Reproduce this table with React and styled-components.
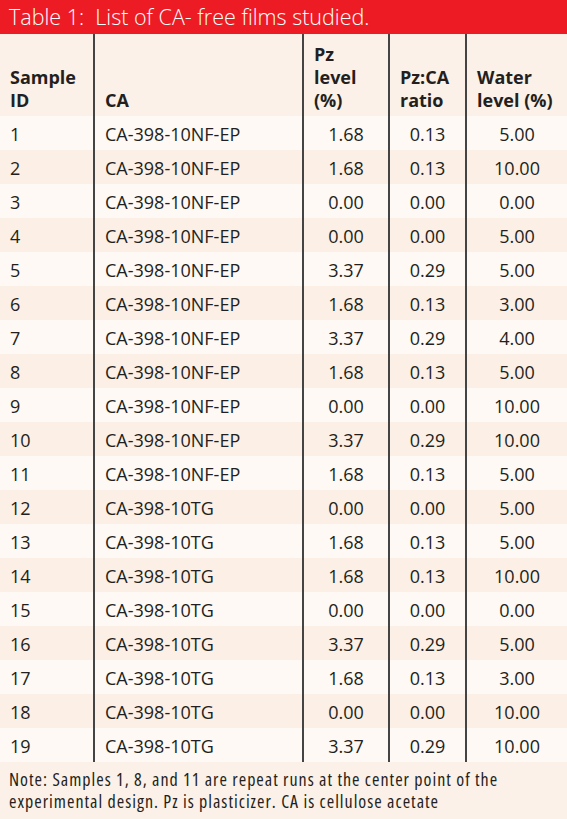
import React from 'react';
import styled, { createGlobalStyle } from 'styled-components';

const GlobalStyle = createGlobalStyle`
  html, body {
    margin: 0;
    padding: 0;
    background: #fcf1e8;
  }
`;

const rows = [
  ['1', 'CA-398-10NF-EP', '1.68', '0.13', '5.00'],
  ['2', 'CA-398-10NF-EP', '1.68', '0.13', '10.00'],
  ['3', 'CA-398-10NF-EP', '0.00', '0.00', '0.00'],
  ['4', 'CA-398-10NF-EP', '0.00', '0.00', '5.00'],
  ['5', 'CA-398-10NF-EP', '3.37', '0.29', '5.00'],
  ['6', 'CA-398-10NF-EP', '1.68', '0.13', '3.00'],
  ['7', 'CA-398-10NF-EP', '3.37', '0.29', '4.00'],
  ['8', 'CA-398-10NF-EP', '1.68', '0.13', '5.00'],
  ['9', 'CA-398-10NF-EP', '0.00', '0.00', '10.00'],
  ['10', 'CA-398-10NF-EP', '3.37', '0.29', '10.00'],
  ['11', 'CA-398-10NF-EP', '1.68', '0.13', '5.00'],
  ['12', 'CA-398-10TG', '0.00', '0.00', '5.00'],
  ['13', 'CA-398-10TG', '1.68', '0.13', '5.00'],
  ['14', 'CA-398-10TG', '1.68', '0.13', '10.00'],
  ['15', 'CA-398-10TG', '0.00', '0.00', '0.00'],
  ['16', 'CA-398-10TG', '3.37', '0.29', '5.00'],
  ['17', 'CA-398-10TG', '1.68', '0.13', '3.00'],
  ['18', 'CA-398-10TG', '0.00', '0.00', '10.00'],
  ['19', 'CA-398-10TG', '3.37', '0.29', '10.00'],
];

const Wrapper = styled.div`
  width: 567px;
  background: #fcf1e8;
  color: #231f20;
  font-family: 'Open Sans', 'Noto Sans', sans-serif;
`;

const Title = styled.div`
  height: 34px;
  background: #ed1c24;
  color: #fff;
  font-weight: 300;
  font-size: 21.5px;
  font-stretch: 90%;
  line-height: 34px;
  padding-left: 9px;
  white-space: pre;
`;

const Table = styled.table`
  width: 567px;
  table-layout: fixed;
  border-collapse: separate;
  border-spacing: 0;
`;

const HeadCell = styled.th`
  height: 82px;
  box-sizing: border-box;
  padding: 0 0 4px 10px;
  vertical-align: bottom;
  text-align: left;
  font-size: 18px;
  font-weight: 700;
  line-height: 23px;
  border-left: ${(p) => (p.$first ? 'none' : '2px solid #444')};
`;

const Row = styled.tr`
  background: ${(p) => (p.$odd ? '#fef9f5' : '#fcefe5')};
`;

const Cell = styled.td`
  height: 34px;
  box-sizing: border-box;
  padding: 2px 0 0 ${(p) => (p.$center ? '0' : '10px')};
  text-align: ${(p) => (p.$center ? 'center' : 'left')};
  font-size: 18px;
  line-height: 32px;
  white-space: nowrap;
  border-left: ${(p) => (p.$first ? 'none' : '2px solid #444')};
`;

const Note = styled.p`
  margin: 0;
  padding: 6px 9px 0;
  height: 56px;
  box-sizing: border-box;
  font-size: 18px;
  font-stretch: condensed;
  letter-spacing: 1px;
  line-height: 22px;
  white-space: nowrap;
`;

export default function App() {
  return (
    <Wrapper>
      <GlobalStyle />
      <Title>{'Table 1:  List of CA- free films studied.'}</Title>
      <Table>
        <colgroup>
          <col style={{ width: 93 }} />
          <col style={{ width: 209 }} />
          <col style={{ width: 86 }} />
          <col style={{ width: 77 }} />
          <col style={{ width: 102 }} />
        </colgroup>
        <thead>
          <tr>
            <HeadCell $first>Sample<br />ID</HeadCell>
            <HeadCell>CA</HeadCell>
            <HeadCell>Pz<br />level<br />(%)</HeadCell>
            <HeadCell>Pz:CA<br />ratio</HeadCell>
            <HeadCell>Water<br />level (%)</HeadCell>
          </tr>
        </thead>
        <tbody>
          {rows.map((r, i) => (
            <Row key={r[0]} $odd={i % 2 === 0}>
              <Cell $first>{r[0]}</Cell>
              <Cell>{r[1]}</Cell>
              <Cell $center>{r[2]}</Cell>
              <Cell $center>{r[3]}</Cell>
              <Cell $center>{r[4]}</Cell>
            </Row>
          ))}
        </tbody>
      </Table>
      <Note>
        Note: Samples 1, 8, and 11 are repeat runs at the center point of the
        <br />
        experimental design. Pz is plasticizer. CA is cellulose acetate
      </Note>
    </Wrapper>
  );
}
